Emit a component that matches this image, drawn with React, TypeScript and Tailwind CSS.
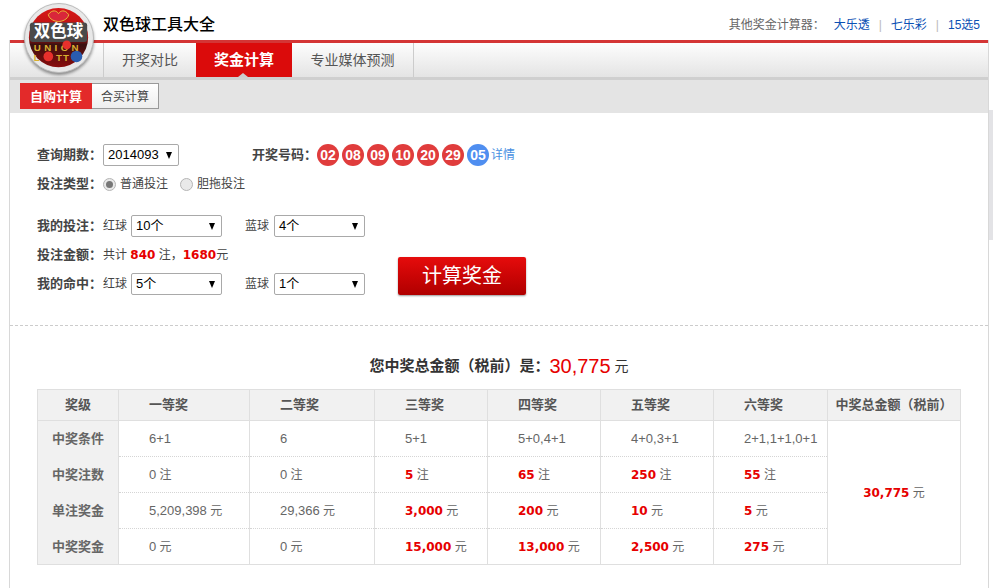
import React from "react";

const cjk = "font-['Liberation_Sans','Noto_Sans_CJK_SC',sans-serif]";

function Arrow() {
  return <span className="w-0 h-0 border-x-[3px] border-x-transparent border-t-[7px] border-t-black" />;
}

function Select({ value, width }: { value: string; width: string }) {
  return (
    <div className={`${width} h-[22px] bg-white border border-[#a9a9a9] rounded-[2px] flex items-center justify-between pl-[4px] pr-[6px] text-[13px] text-black shrink-0`}>
      <span>{value}</span>
      <Arrow />
    </div>
  );
}

function Radio({ checked, label }: { checked?: boolean; label: string }) {
  return (
    <span className="flex items-center gap-[4px]">
      <span className="w-[13px] h-[13px] rounded-full border border-[#b5b5b5] bg-[#e9e9e9] flex items-center justify-center">
        {checked && <span className="w-[7px] h-[7px] rounded-full bg-[#777]" />}
      </span>
      <span>{label}</span>
    </span>
  );
}

function Ball({ n, blue }: { n: string; blue?: boolean }) {
  return (
    <span className={`w-[22px] h-[22px] rounded-full text-white font-bold text-[14px] flex items-center justify-center ${blue ? "bg-[#4f8ef0]" : "bg-[#e03c3c]"}`}>
      {n}
    </span>
  );
}

function Logo() {
  return (
    <div className="absolute left-[24px] top-[3px] w-[70px] h-[70px] rounded-full bg-[#e8e8e8] border border-[#bbb] shadow-[0_2px_3px_rgba(0,0,0,0.4)] overflow-hidden">
      <svg viewBox="0 0 70 70" className="w-full h-full">
        <defs>
          <linearGradient id="logoBg" x1="0" y1="0" x2="0" y2="1">
            <stop offset="0" stopColor="#d81818" />
            <stop offset="0.5" stopColor="#b01010" />
            <stop offset="0.62" stopColor="#3a1010" />
            <stop offset="1" stopColor="#8a0c0c" />
          </linearGradient>
        </defs>
        <circle cx="34.5" cy="34.5" r="30.5" fill="url(#logoBg)" />
        <path d="M24 11c4-6 9-4 10.500-1 1.500-3 6.500-5 10.500 1-1 5-7 7-10.500 7s-9.500-2-10.500-7z" fill="#d9263a" stroke="#e8bc3a" strokeWidth="1" />
        <rect x="5" y="19" width="59" height="20" rx="3" fill="#4a4a4a" />
        <text x="34.500" y="34" textAnchor="middle" fontSize="17" fontWeight="700" fill="#fff" fontFamily="'Noto Sans CJK SC',sans-serif">双色球</text>
        <text x="9" y="48" fontSize="10" fontWeight="700" fill="#d8b030" fontFamily="'Liberation Sans',sans-serif" letterSpacing="3.500">UNION</text>
        <text x="9" y="59" fontSize="10" fontWeight="700" fill="#d8b030" fontFamily="'Liberation Sans',sans-serif">L</text>
        <text x="32" y="59" fontSize="10" fontWeight="700" fill="#d8b030" fontFamily="'Liberation Sans',sans-serif" letterSpacing="1">TT</text>
        <circle cx="43" cy="42" r="4.500" fill="#e8302c" />
        <circle cx="24" cy="54" r="5" fill="#e8302c" />
        <circle cx="53" cy="54" r="6" fill="#2a5cb0" />
      </svg>
    </div>
  );
}

function Red({ v, unit }: { v: string; unit: string }) {
  return (
    <>
      <b className="font-['DejaVu_Sans',sans-serif] text-[#e60000] text-[12px]">{v}</b> {unit}
    </>
  );
}

function Gray({ v, unit }: { v: string; unit?: string }) {
  return (
    <>
      <span className="text-[13px]">{v}</span>
      {unit && ` ${unit}`}
    </>
  );
}

const headers = ["一等奖", "二等奖", "三等奖", "四等奖", "五等奖", "六等奖"];
const rows: { label: string; cells: React.ReactNode[] }[] = [
  {
    label: "中奖条件",
    cells: ["6+1", "6", "5+1", "5+0,4+1", "4+0,3+1", "2+1,1+1,0+1"].map((v) => <Gray v={v} />),
  },
  {
    label: "中奖注数",
    cells: [<Gray v="0" unit="注" />, <Gray v="0" unit="注" />, <Red v="5" unit="注" />, <Red v="65" unit="注" />, <Red v="250" unit="注" />, <Red v="55" unit="注" />],
  },
  {
    label: "单注奖金",
    cells: [<Gray v="5,209,398" unit="元" />, <Gray v="29,366" unit="元" />, <Red v="3,000" unit="元" />, <Red v="200" unit="元" />, <Red v="10" unit="元" />, <Red v="5" unit="元" />],
  },
  {
    label: "中奖奖金",
    cells: [<Gray v="0" unit="元" />, <Gray v="0" unit="元" />, <Red v="15,000" unit="元" />, <Red v="13,000" unit="元" />, <Red v="2,500" unit="元" />, <Red v="275" unit="元" />],
  },
];

export default function App() {
  return (
    <div className={`${cjk} relative w-[993px] h-[588px] bg-white text-[12px] text-[#444] overflow-hidden`}>
      <Logo />
      <div className="absolute left-[989px] top-[110px] w-[4px] h-[130px] bg-[#e3e3e6]" />
      <div className="h-[40px] flex items-center justify-between pl-[103px] pr-[13px] pt-[10px]">
        <span className="text-[16px] text-black font-medium">双色球工具大全</span>
        <div className="flex items-center text-[#666]">
          <span className="mr-[9px]">其他奖金计算器：</span>
          <span className="text-[#0a50b4]">大乐透</span>
          <span className="text-[#bbb] mx-[9px]">|</span>
          <span className="text-[#0a50b4]">七乐彩</span>
          <span className="text-[#bbb] mx-[9px]">|</span>
          <span className="text-[#0a50b4]">15选5</span>
        </div>
      </div>

      <div className="ml-[9px] w-[980px] border-x border-[#d8d8d8] h-[548px]">
        <div className="h-[3px] bg-[#d43535]" />
        <div className="h-[34px] bg-gradient-to-b from-[#fdfdfd] to-[#e4e4e4] flex pl-[93px] text-[14px]">
          <span className="w-[93px] border-l border-[#ccc] flex items-center justify-center text-[#555]">开奖对比</span>
          <span className="relative w-[96px] bg-[#db0b0b] text-white text-[15px] font-bold flex items-center justify-center">
            奖金计算
            <span className="absolute bottom-0 left-[42px] border-x-[5px] border-x-transparent border-b-[4px] border-b-[#ccc]" />
          </span>
          <span className="w-[122px] border-r border-[#ccc] flex items-center justify-center text-[#555]">专业媒体预测</span>
        </div>
        <div className="h-[3px] bg-[#cfcfcf]" />
        <div className="h-[33px] bg-[#e4e4e4] pl-[10px] pt-[3px] flex">
          <span className="w-[72px] h-[26px] pt-[2px] bg-[#e32a2a] text-white text-[13px] font-bold flex items-center justify-center">自购计算</span>
          <span className="w-[67px] h-[26px] pt-[2px] border border-[#999] border-l-0 bg-gradient-to-b from-white to-[#eee] flex items-center justify-center text-[#444]">合买计算</span>
        </div>

        <div className="relative pl-[27px] pt-[31px] h-[213px] border-b border-dashed border-[#ccc]">
          <div className="flex items-center h-[22px]">
            <b className="w-[66px] text-[13px]">查询期数：</b>
            <Select value="2014093" width="w-[76px]" />
            <b className="ml-[73px] w-[65px] text-[13px]">开奖号码：</b>
            <div className="flex gap-[3px]">
              {["02", "08", "09", "10", "20", "29"].map((n) => <Ball key={n} n={n} />)}
              <Ball n="05" blue />
            </div>
            <span className="ml-[2px] text-[#4a90e2]">详情</span>
          </div>
          <div className="flex items-center h-[20px] mt-[8px]">
            <b className="w-[66px] text-[13px]">投注类型：</b>
            <Radio checked label="普通投注" />
            <span className="w-[12px]" />
            <Radio label="胆拖投注" />
          </div>
          <div className="flex items-center h-[22px] mt-[21px]">
            <b className="w-[66px] text-[13px]">我的投注：</b>
            <span className="w-[28px]">红球</span>
            <Select value="10个" width="w-[91px]" />
            <span className="ml-[23px] w-[29px]">蓝球</span>
            <Select value="4个" width="w-[91px]" />
          </div>
          <div className="flex items-center h-[20px] mt-[8px]">
            <b className="w-[66px] text-[13px]">投注金额：</b>
            <span>共计 <b className="font-['DejaVu_Sans',sans-serif] text-[#e60000] text-[12px]">840</b> 注，<b className="font-['DejaVu_Sans',sans-serif] text-[#e60000] text-[12px]">1680</b>元</span>
          </div>
          <div className="flex items-center h-[22px] mt-[8px]">
            <b className="w-[66px] text-[13px]">我的命中：</b>
            <span className="w-[28px]">红球</span>
            <Select value="5个" width="w-[91px]" />
            <span className="ml-[23px] w-[29px]">蓝球</span>
            <Select value="1个" width="w-[91px]" />
          </div>
          <div className="absolute left-[388px] top-[144px] w-[128px] h-[38px] rounded-[2px] bg-gradient-to-b from-[#e60c0c] to-[#b00000] shadow-[0_1px_2px_rgba(0,0,0,0.4)] text-white text-[20px] flex items-center justify-center">
            计算奖金
          </div>
        </div>

        <div className="pl-[27px] pt-[27px]">
          <div className="w-[924px] h-[36px] flex items-start justify-center leading-[26px]">
            <b className="text-[#333] text-[15px]">您中奖总金额（税前）是：</b>
            <span className="text-[#e60000] text-[20px] mr-[4px]">30,775</span>
            <span className="text-[#333] text-[14px]">元</span>
          </div>
          <table className="w-[923px] table-fixed border-collapse text-[#666]">
            <colgroup>
              <col className="w-[81px]" />
              <col className="w-[131px]" />
              <col className="w-[125px]" />
              <col className="w-[113px]" />
              <col className="w-[113px]" />
              <col className="w-[113px]" />
              <col className="w-[114px]" />
              <col className="w-[133px]" />
            </colgroup>
            <thead>
              <tr className="h-[31px] bg-[#f1f1f1] text-[#555] text-[13px]">
                <th className="border border-[#dfdfdf] font-bold">奖级</th>
                {headers.map((h) => (
                  <th key={h} className="border border-[#dfdfdf] font-bold text-left pl-[30px]">{h}</th>
                ))}
                <th className="border border-[#dfdfdf] font-bold">中奖总金额（税前）</th>
              </tr>
            </thead>
            <tbody>
              {rows.map((r, i) => (
                <tr key={r.label} className="h-[36px]">
                  <td className={`border-x border-[#dfdfdf] bg-[#f1f1f1] text-center font-bold text-[13px] ${i === 3 ? "border-b" : ""}`}>{r.label}</td>
                  {r.cells.map((c, j) => (
                    <td
                      key={j}
                      className={`border-x border-b border-x-[#dfdfdf] pl-[30px] ${i === 3 ? "border-b-[#dfdfdf]" : "border-b-[#d5d5d5] [border-bottom-style:dotted]"}`}
                    >
                      {c}
                    </td>
                  ))}
                  {i === 0 && (
                    <td rowSpan={4} className="border border-[#dfdfdf] text-center">
                      <Red v="30,775" unit="元" />
                    </td>
                  )}
                </tr>
              ))}
            </tbody>
          </table>
        </div>
      </div>
    </div>
  );
}
